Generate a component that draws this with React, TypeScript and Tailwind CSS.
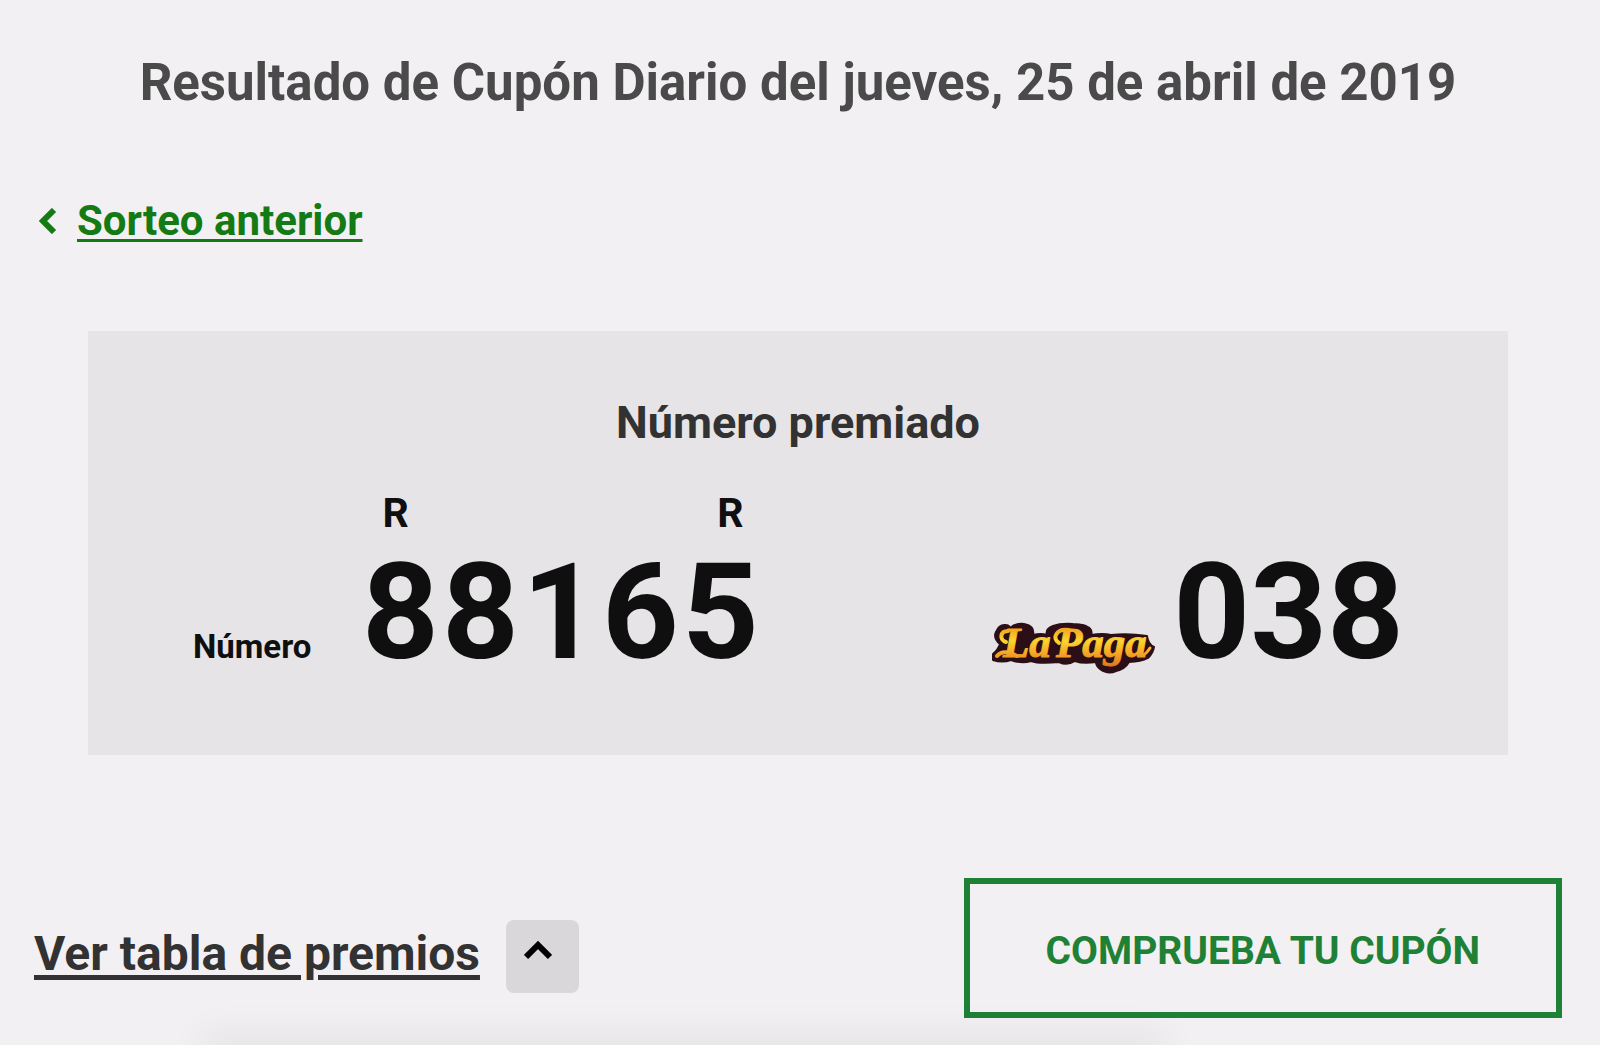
const mainNumber = ['8', '8', '1', '6', '5']

function LaPagaLogo() {
  return (
    <svg viewBox="0 -8 164 68" className="w-[164px] h-[68px]" role="img" aria-label="La Paga">
      <defs>
        <linearGradient id="gold" gradientUnits="userSpaceOnUse" x1="0" y1="4" x2="0" y2="46">
          <stop offset="0" stopColor="#f09a1c" />
          <stop offset="0.35" stopColor="#fbd52e" />
          <stop offset="0.6" stopColor="#f7ae27" />
          <stop offset="1" stopColor="#e0701c" />
        </linearGradient>
      </defs>
      {/* dark backing plate */}
      <path
        d="M2 32 Q7 28 9 22 Q2 16 5 10 Q8 2 15 3 Q18 3 19 6 Q24 1 33 2 Q44 4 42 13 Q50 11 56 13 Q54 7 62 4 Q70 1 82 2 Q96 2 100 8 Q101 11 100 13 Q112 11 120 13 Q137 11 156 14 Q157 22 163 25 Q162 31 157 36 Q150 40 138 40 Q134 47 125 49 Q117 53 109 47 Q105 44 105 40 Q92 42 84 39 Q76 44 68 40 Q48 42 40 39 Q31 42 20 38 Q11 41 2 38 Z"
        fill="#2c0f16"
        stroke="#2c0f16"
        strokeWidth="2"
        strokeLinejoin="round"
      />
      <g
        fontFamily='"Liberation Serif", serif'
        fontWeight="700"
        fontStyle="italic"
        fontSize="43"
        fill="url(#gold)"
        stroke="url(#gold)"
        strokeWidth="1"
        strokeLinejoin="round"
      >
        <text x="12" y="35">La</text>
        <text x="65" y="35">Paga</text>
      </g>
      {/* swashes */}
      <g fill="none" stroke="url(#gold)" strokeWidth="4" strokeLinecap="round">
        <path d="M17 9 C9 9 8 18 15 20" />
        <path d="M6 34 C11 28 18 30 26 34" />
        <path d="M78 8 C66 6 60 16 68 21" />
        <path d="M152 33 C155 32 157 29 159 26" strokeWidth="3" />
      </g>
    </svg>
  )
}

export default function App() {
  return (
    <main className="min-h-screen flex flex-col overflow-hidden bg-[#f2f0f3] pl-[34px] pr-[38px] pt-[53px] font-['Roboto',sans-serif] font-bold text-[#0f0f10]">
      <h1 className="text-center text-[51px] leading-[60px] text-[#4a4a4a]">
        Resultado de Cupón Diario del jueves, 25 de abril de 2019
      </h1>

      <nav className="mt-[83px] flex items-center gap-5 pl-[5px] text-[#147a14]">
        <svg viewBox="0 0 18 26" className="w-[18px] h-[26px]" fill="none" stroke="currentColor" strokeWidth="6" aria-hidden="true">
          <path d="M15 2 L4 13 L15 24" />
        </svg>
        <a href="#anterior" className="text-[42px] leading-[50px] underline decoration-[3px] underline-offset-[4px] [text-decoration-skip-ink:none]">
          Sorteo anterior
        </a>
      </nav>

      <section className="mx-[54px] mt-[85px] bg-[#e6e4e7] pt-[66px] pb-[65px]">
        <h2 className="text-center text-[45px] leading-[52px] text-[#323232]">Número premiado</h2>
        <div className="mt-[41px] flex items-end justify-between pl-[105px] pr-[104px]">
          <div className="flex items-baseline-last gap-[49px]">
            <span className="text-[33px] leading-10">Número</span>
            <div>
              <div className="flex justify-between pl-[22px] pr-[17px] text-[41px] leading-[46px]">
                <span>R</span>
                <span>R</span>
              </div>
              <div className="flex text-[134px] leading-[154px]">
                {mainNumber.map((digit, i) => (
                  <span key={i} className="w-20 text-center">{digit}</span>
                ))}
              </div>
            </div>
          </div>
          <div className="flex items-end gap-[18px]">
            <div className="pb-2">
              <LaPagaLogo />
            </div>
            <span className="text-[134px] leading-[154px]">038</span>
          </div>
        </div>
      </section>

      <div className="mt-[123px] flex items-center justify-between">
        <div className="flex items-center gap-[26px]">
          <a href="#premios" className="mt-3 text-[48px] leading-[60px] text-[#323232] underline decoration-[5px] underline-offset-[5px]">
            Ver tabla de premios
          </a>
          <button type="button" aria-label="Mostrar tabla de premios" className="mt-4 flex h-[73px] w-[73px] items-center justify-center rounded-lg bg-[#d9d7da] pr-2 pb-3 text-black">
            <svg viewBox="0 0 28 22" className="w-7 h-[22px]" fill="none" stroke="currentColor" strokeWidth="6" aria-hidden="true">
              <path d="M2 18 L14 6 L26 18" />
            </svg>
          </button>
        </div>
        <button type="button" className="border-[6px] border-[#1f8135] px-[76px] pt-[44px] pb-[38px] text-[39px] leading-[46px] text-[#1f8135]">
          COMPRUEBA TU CUPÓN
        </button>
      </div>

      {/* edge of the block below the fold */}
      <div className="mt-auto ml-[174px] mr-[402px] shadow-[0_0_36px_6px_rgba(0,0,0,0.13)]" />
    </main>
  )
}
